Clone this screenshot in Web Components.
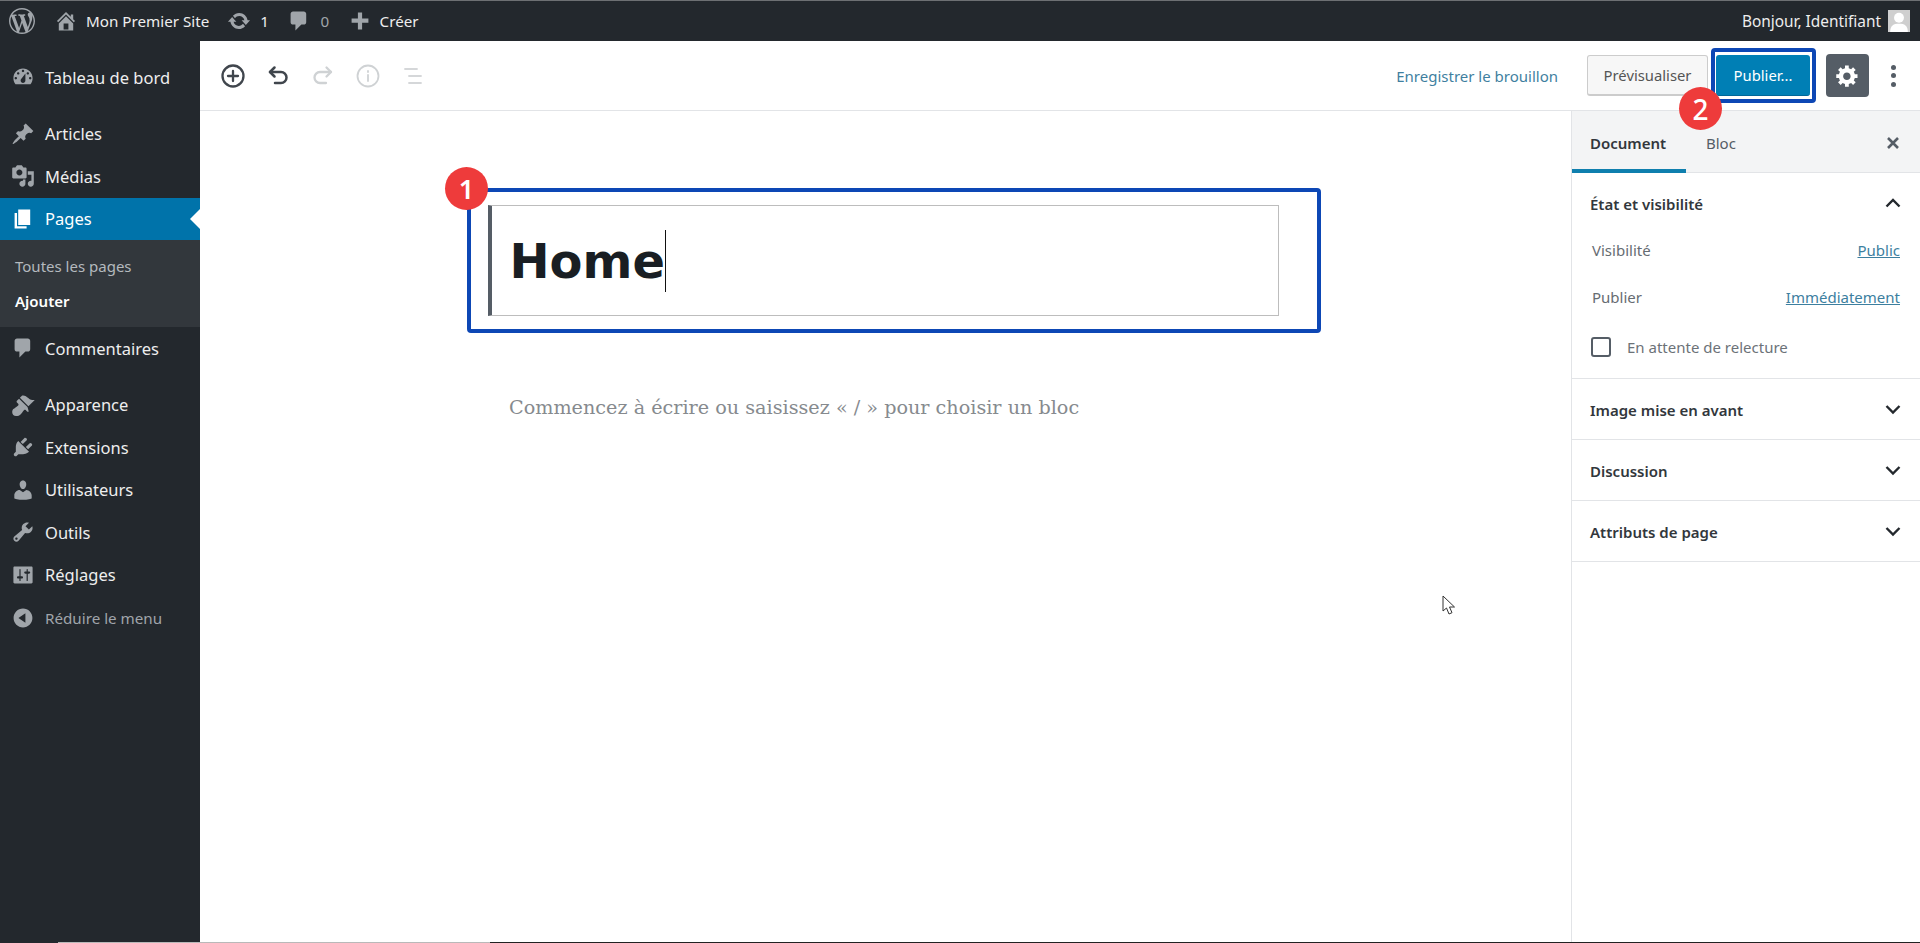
<!DOCTYPE html>
<html lang="fr">
<head>
<meta charset="utf-8">
<title>Ajouter une page</title>
<style>
  html, body { margin: 0; height: 943px; overflow: hidden; background: #fff; }
  body { font-family: "Noto Sans", "Open Sans", sans-serif; }
  wp-shell { height: 943px; }
</style>
</head>
<body>
<wp-shell>
  <wp-adminbar slot="bar"></wp-adminbar>
  <wp-sidemenu slot="menu"></wp-sidemenu>
  <editor-toolbar slot="toolbar"></editor-toolbar>
  <editor-canvas slot="canvas"></editor-canvas>
  <doc-panel slot="panel"></doc-panel>
</wp-shell>

<script>
// dashicons, 20x20
const ICONS = {
  wp: 'M20 10c0-5.51-4.49-10-10-10C4.48 0 0 4.49 0 10c0 5.52 4.48 10 10 10 5.51 0 10-4.48 10-10zM7.78 15.37L4.37 6.22c.55-.02 1.17-.08 1.17-.08.5-.06.44-1.13-.06-1.11 0 0-1.45.11-2.37.11-.18 0-.37 0-.58-.01C4.12 2.69 6.87 1.11 10 1.11c2.33 0 4.45.87 6.05 2.34-.68-.11-1.65.39-1.65 1.58 0 .74.45 1.36.9 2.1.35.61.55 1.36.55 2.46 0 1.49-1.4 5-1.4 5l-3.03-8.37c.54-.02.82-.17.82-.17.5-.05.44-1.25-.06-1.22 0 0-1.44.12-2.38.12-.87 0-2.33-.12-2.33-.12-.5-.03-.56 1.2-.06 1.22l.92.08 1.26 3.41zM17.41 10c.24-.64.74-1.87.43-4.25.7 1.29 1.05 2.71 1.05 4.25 0 3.29-1.73 6.24-4.4 7.78.97-2.59 1.94-5.2 2.92-7.78zM6.1 18.09C3.12 16.65 1.11 13.53 1.11 10c0-1.3.23-2.48.72-3.59C3.25 10.3 4.67 14.2 6.1 18.09zm4.03-6.63l2.58 6.98c-.86.29-1.76.45-2.71.45-.79 0-1.57-.11-2.29-.33.81-2.38 1.62-4.74 2.42-7.1z',
  home: 'M16 8.5l1.53 1.53-1.06 1.06L10 4.62l-6.47 6.47-1.06-1.06L10 2.5l4 4v-2h2v4zm-6-2.46l6 5.99V18H4v-5.97zM12 17v-5H8v5h4z',
  update: 'M10.2 3.28c3.53 0 6.43 2.61 6.92 6h2.08l-3.5 4-3.5-4h2.32c-.45-1.97-2.21-3.45-4.32-3.45-1.45 0-2.73.71-3.54 1.78L4.95 5.66C6.23 4.2 8.11 3.28 10.2 3.28zm-.4 13.44c-3.52 0-6.43-2.61-6.92-6H.8l3.5-4c1.17 1.33 2.33 2.67 3.5 4H5.48c.45 1.97 2.21 3.45 4.32 3.45 1.45 0 2.73-.71 3.54-1.78l1.71 1.95c-1.28 1.46-3.15 2.38-5.25 2.38z',
  comment: 'M5 2h9c1.1 0 2 .9 2 2v7c0 1.1-.9 2-2 2h-2l-5 5v-5H5c-1.1 0-2-.9-2-2V4c0-1.1.9-2 2-2z',
  plus: 'M17 8v3.500h-5.250V17h-3.500v-5.500H3V8h5.250V3h3.500v5H17z',
  dashboard: 'M3.76 16h12.48c1.1-1.37 1.76-3.11 1.76-5 0-4.42-3.58-8-8-8s-8 3.58-8 8c0 1.89.66 3.63 1.76 5zM10 4c.55 0 1 .45 1 1s-.45 1-1 1-1-.45-1-1 .45-1 1-1zM6 6c.55 0 1 .45 1 1s-.45 1-1 1-1-.45-1-1 .45-1 1-1zm8 0c.55 0 1 .45 1 1s-.45 1-1 1-1-.45-1-1 .45-1 1-1zm-5.37 5.55L12 7v6c0 1.1-.9 2-2 2s-2-.9-2-2c0-.57.24-1.08.63-1.45zM4 10c.55 0 1 .45 1 1s-.45 1-1 1-1-.45-1-1 .45-1 1-1zm12 0c.55 0 1 .45 1 1s-.45 1-1 1-1-.45-1-1 .45-1 1-1z',
  pin: 'M10.44 3.02l1.82-1.82 6.36 6.35-1.83 1.82c-1.05-.68-2.48-.57-3.41.36l-.75.75c-.92.93-1.04 2.35-.35 3.41l-1.83 1.82-2.41-2.41-2.8 2.79c-.42.42-3.38 2.71-3.8 2.29s1.86-3.39 2.28-3.81l2.79-2.79L4.1 9.36l1.83-1.82c1.05.69 2.48.57 3.4-.36l.75-.75c.93-.92 1.05-2.35.36-3.41z',
  media: 'M13 11V4c0-.55-.45-1-1-1h-1.67L9 1H5L3.67 3H2c-.55 0-1 .45-1 1v7c0 .55.45 1 1 1h10c.55 0 1-.45 1-1zM7 4.5c1.38 0 2.5 1.12 2.5 2.5S8.38 9.5 7 9.5 4.5 8.38 4.5 7 5.62 4.5 7 4.5zM14 6h5v10.5c0 1.38-1.12 2.5-2.5 2.5S14 17.88 14 16.5s1.12-2.5 2.5-2.5c.17 0 .34.02.5.05V9h-3V6zm-4 8.05V13h2v3.5c0 1.38-1.12 2.5-2.5 2.5S7 17.88 7 16.5 8.12 14 9.5 14c.17 0 .34.02.5.05z',
  page: 'M6 15V2h10v13H6zm-1 1h8v2H3V5h2v11z',
  brush: 'M14.48 11.06L7.41 3.99l1.5-1.5c.5-.56 2.3-.47 3.51.32 1.21.8 1.43 1.28 2.91 2.1 1.18.64 2.45 1.26 4.45.85zm-.71.71L6.7 4.7 4.93 6.47c-.39.39-.39 1.02 0 1.41l1.06 1.06c.39.39.39 1.03 0 1.42-.6.6-1.43 1.11-2.21 1.69-.35.26-.7.53-1.01.84C1.43 13.23.91 14.8 1 16.1c.06.9.35 1.68.91 2.24.56.56 1.34.85 2.24.91 1.3.09 2.87-.43 4.22-1.77.31-.31.58-.66.84-1.01.58-.78 1.09-1.61 1.69-2.21.39-.39 1.03-.39 1.42 0l1.06 1.06c.39.39 1.02.39 1.41 0z',
  plug: 'M13.11 4.36L9.87 7.6 8 5.73l3.24-3.24c.35-.34 1.05-.2 1.56.32.52.51.66 1.21.31 1.55zm-8 1.77l.91-1.12 9.01 9.01-1.19.84c-.71.71-2.63 1.16-3.82 1.16H6.14L4.9 17.26c-.59.59-1.54.59-2.12 0-.59-.58-.59-1.53 0-2.12l1.24-1.24v-3.88c0-1.13.4-3.19 1.09-3.89zm7.26 3.97l3.24-3.24c.34-.35 1.04-.21 1.55.31.52.51.66 1.21.31 1.55l-3.24 3.25z',
  user: 'M10 9.25c-2.27 0-2.73-3.44-2.73-3.44C7 4.02 7.82 2 9.97 2c2.16 0 2.98 2.02 2.71 3.81 0 0-.41 3.44-2.68 3.44zm0 2.57L12.72 10c2.39 0 4.52 2.33 4.52 4.53v2.49s-3.65 1.13-7.24 1.13c-3.65 0-7.24-1.13-7.24-1.13v-2.49c0-2.25 1.94-4.48 4.47-4.48z',
  wrench: 'M16.68 9.77c-1.34 1.34-3.3 1.67-4.95.99l-5.41 6.52c-.99.99-2.59.99-3.58 0s-.99-2.59 0-3.57l6.52-5.42c-.68-1.65-.35-3.61.99-4.95 1.28-1.28 3.12-1.62 4.72-1.06l-2.89 2.89 2.82 2.82 2.86-2.87c.53 1.58.18 3.39-1.08 4.65zM3.81 16.21c.4.39 1.04.39 1.43 0 .4-.4.4-1.04 0-1.43-.39-.4-1.03-.4-1.43 0-.39.39-.39 1.03 0 1.43z',
  sliders: 'M18 16V4c0-.55-.45-1-1-1H3c-.55 0-1 .45-1 1v12c0 .55.45 1 1 1h14c.55 0 1-.45 1-1zM8 11h1c.55 0 1 .45 1 1s-.45 1-1 1H8v1.5c0 .28-.22.5-.5.5s-.5-.22-.5-.5V13H6c-.55 0-1-.45-1-1s.45-1 1-1h1V5.500c0-.28.22-.5.5-.5s.5.22.5.5V11zm5-2h-1c-.55 0-1-.45-1-1s.45-1 1-1h1V5.500c0-.28.22-.5.5-.5s.5.22.5.5V7h1c.55 0 1 .45 1 1s-.45 1-1 1h-1v5.500c0 .28-.22.5-.5.5s-.5-.22-.5-.5V9z',
  collapse: 'M10 2.16c4.33 0 7.84 3.51 7.84 7.84s-3.51 7.84-7.84 7.84S2.16 14.33 2.16 10 5.71 2.16 10 2.16zm2 11.72V6.12L6.18 9.97z',
  gear: 'M18 12h-2.18c-.17.7-.44 1.35-.81 1.93l1.54 1.54-2.1 2.1-1.54-1.54c-.58.36-1.23.63-1.91.79V19H8v-2.18c-.68-.16-1.33-.43-1.91-.79l-1.54 1.54-2.12-2.12 1.54-1.54c-.36-.58-.63-1.23-.79-1.91H1V9.030h2.17c.16-.7.44-1.35.8-1.94L2.43 5.55l2.1-2.1 1.54 1.54c.58-.37 1.24-.64 1.93-.81V2h3v2.18c.68.16 1.33.43 1.91.79l1.54-1.54 2.12 2.12-1.54 1.54c.36.59.64 1.24.8 1.94H18V12zm-8.500 1.500c1.66 0 3-1.34 3-3s-1.34-3-3-3-3 1.34-3 3 1.34 3 3 3z'
};
const icon = (name, size, color) =>
  `<svg width="${size}" height="${size}" viewBox="0 0 20 20" fill="${color}" fill-rule="evenodd" style="display:block;flex:none"><path d="${ICONS[name]}"/></svg>`;

class WpShell extends HTMLElement {
  constructor() {
    super();
    this.attachShadow({mode: 'open'});
    this.shadowRoot.innerHTML = `
      <style>
        :host { display: grid; grid-template-columns: 200px 1fr 349px; grid-template-rows: 41px 70px 1fr 1px; width: 1920px; }
        .bar { grid-column: 1 / 4; }
        .menu { grid-row: 2 / 4; }
        .toolbar { grid-column: 2 / 4; }
        .panel { position: relative; }
        /* strip left along the bottom edge of the capture */
        .edge { grid-column: 1 / 4; background: linear-gradient(90deg, #23282d 58px, #b9b9b9 58px, #b9b9b9 490px, #222 490px); }
      </style>
      <div class="bar"><slot name="bar"></slot></div>
      <div class="menu"><slot name="menu"></slot></div>
      <div class="toolbar"><slot name="toolbar"></slot></div>
      <div><slot name="canvas"></slot></div>
      <div class="panel"><slot name="panel"></slot></div>
      <div class="edge"></div>`;
  }
}

class WpAdminbar extends HTMLElement {
  constructor() {
    super();
    this.attachShadow({mode: 'open'});
    this.shadowRoot.innerHTML = `
      <style>
        :host { display: flex; align-items: center; height: 40px; border-top: 1px solid #6d7073; background: #23282d; color: #eee; font-size: 15.200px; padding: 0 10px 0 9px; }
        .it { display: flex; align-items: center; }
        .muted { color: #a0a5aa; }
        .push { margin-left: auto; font-size: 15.400px; }
        .avatar { width: 22px; height: 22px; background: #ddd; margin-left: 7px; overflow: hidden; }
      </style>
      <span class="it">${icon('wp', 26, '#a0a5aa')}</span>
      <span class="it" style="margin-left:19px">${icon('home', 24, '#a0a5aa')}<span style="margin-left:8px">Mon Premier Site</span></span>
      <span class="it" style="margin-left:18px">${icon('update', 24, '#a0a5aa')}<span style="margin-left:9px">1</span></span>
      <span class="it" style="margin-left:18.500px">${icon('comment', 24, '#a0a5aa')}<span class="muted" style="margin-left:9px">0</span></span>
      <span class="it" style="margin-left:18.500px">${icon('plus', 24, '#a0a5aa')}<span style="margin-left:8px">Créer</span></span>
      <span class="it push">Bonjour, Identifiant
        <span class="avatar"><svg width="22" height="22" viewBox="0 0 20 20" style="display:block"><rect width="20" height="20" fill="#cfcfcf"/><circle cx="10" cy="7" r="4.500" fill="#fff"/><path d="M2 20c0-6 3-7.500 8-7.500s8 1.500 8 7.500z" fill="#fff"/></svg></span>
      </span>`;
  }
}

class WpMenuItem extends HTMLElement {
  constructor() {
    super();
    this.attachShadow({mode: 'open'});
    const name = this.getAttribute('icon');
    const active = this.hasAttribute('active');
    this.shadowRoot.innerHTML = `
      <style>
        :host { display: flex; align-items: center; height: 42.500px; padding-left: 11px; position: relative; color: #eee; font-size: 16.500px; }
        :host([active]) { background: #0073aa; color: #fff; }
        :host([dim]) { color: #a0a5aa; font-size: 15.200px; padding-top: 2px; height: 40.500px; }
        .ic { width: 34px; flex: none; }
        .tip { position: absolute; right: 0; top: 50%; margin-top: -10px; border: 10px solid transparent; border-right-color: #fff; border-left-width: 0; }
      </style>
      <span class="ic">${icon(name, 24, active ? '#fff' : '#a0a5aa')}</span>
      <slot></slot>
      ${active ? '<span class="tip"></span>' : ''}`;
  }
}

class WpSidemenu extends HTMLElement {
  constructor() {
    super();
    this.attachShadow({mode: 'open'});
    this.shadowRoot.innerHTML = `
      <style>
        :host { display: block; background: #23282d; height: 901px; padding-top: 15px; box-sizing: border-box; }
        .gap { margin-top: 14px; }
        .sub { background: #32373c; height: 87px; padding: 8px 15px 0; box-sizing: border-box; font-size: 15px; color: #b4b9be; }
        .sub div { height: 35px; display: flex; align-items: center; }
        .sub .cur { color: #fff; font-weight: 600; }
      </style>
      <wp-menu-item icon="dashboard">Tableau de bord</wp-menu-item>
      <wp-menu-item class="gap" icon="pin">Articles</wp-menu-item>
      <wp-menu-item icon="media">Médias</wp-menu-item>
      <wp-menu-item icon="page" active>Pages</wp-menu-item>
      <div class="sub"><div>Toutes les pages</div><div class="cur">Ajouter</div></div>
      <wp-menu-item icon="comment">Commentaires</wp-menu-item>
      <wp-menu-item class="gap" icon="brush">Apparence</wp-menu-item>
      <wp-menu-item icon="plug">Extensions</wp-menu-item>
      <wp-menu-item icon="user">Utilisateurs</wp-menu-item>
      <wp-menu-item icon="wrench">Outils</wp-menu-item>
      <wp-menu-item icon="sliders">Réglages</wp-menu-item>
      <wp-menu-item icon="collapse" dim>Réduire le menu</wp-menu-item>`;
  }
}

class EditorToolbar extends HTMLElement {
  constructor() {
    super();
    this.attachShadow({mode: 'open'});
    this.shadowRoot.innerHTML = `
      <style>
        :host { display: flex; align-items: center; height: 69px; border-bottom: 1px solid #e2e4e7; background: #fff; padding: 0 24.500px 0 10px; font-size: 15px; }
        .tool { width: 45px; height: 30px; display: flex; align-items: center; justify-content: center; flex: none; }
        .tool svg { display: block; fill: none; stroke-linecap: round; stroke-linejoin: round; }
        .save { margin-left: auto; color: #3f7f9f; }
        .btn { height: 41px; box-sizing: border-box; border-radius: 3px; display: flex; align-items: center; justify-content: center; font-size: 14.800px; }
        .prev { width: 121px; margin-left: 29px; background: #f7f7f7; border: 1px solid #ccc; border-bottom-width: 2px; color: #555; }
        .frame { position: relative; margin-left: 3px; border: 4px solid #0d47b5; border-radius: 4px; padding: 3px 2px 3px 1px; }
        .pub { width: 94px; background: #007fb5; color: #fff; border-bottom: 1px solid #006799; }
        .gear { width: 43px; height: 43px; margin-left: 10px; background: #555d66; border-radius: 4px; display: flex; align-items: center; justify-content: center; }
        .dots { margin-left: 21.500px; width: 5px; display: flex; flex-direction: column; gap: 3.500px; }
        .dots i { width: 5px; height: 5px; border-radius: 50%; background: #555d66; }
        .badge { position: absolute; left: -36px; top: 35px; width: 43px; height: 43px; border-radius: 50%; background: #ee3b3b; color: #fff; font-size: 28px; font-weight: 500; display: flex; align-items: center; justify-content: center; z-index: 5; }
      </style>
      <span class="tool"><svg width="28" height="28" viewBox="0 0 28 28" stroke="#40464d" stroke-width="2.300"><circle cx="14" cy="14" r="10.500"/><path d="M14 9v10M9 14h10"/></svg></span>
      <span class="tool"><svg width="26" height="26" viewBox="0 0 26 26" stroke="#40464d" stroke-width="2.500"><path d="M5 9h11a5.500 5.500 0 0 1 0 11h-6"/><path d="M9.500 4.500L5 9l4.500 4.500" /></svg></span>
      <span class="tool"><svg width="26" height="26" viewBox="0 0 26 26" stroke="#cfd2d4" stroke-width="2.300"><path d="M21 9H10a5.500 5.500 0 0 0 0 11h6"/><path d="M16.500 4.500L21 9l-4.500 4.500"/></svg></span>
      <span class="tool"><svg width="26" height="26" viewBox="0 0 26 26" stroke="#cfd2d4" stroke-width="1.800"><circle cx="13" cy="13" r="10.500"/><path d="M13 12v6M13 8v1"/></svg></span>
      <span class="tool"><svg width="22" height="22" viewBox="0 0 22 22" stroke="#d5d7d9" stroke-width="1.800"><path d="M3 4h12M7 11h12M7 18h12"/></svg></span>
      <span class="save">Enregistrer le brouillon</span>
      <span class="btn prev">Prévisualiser</span>
      <span class="frame"><span class="btn pub">Publier...</span><span class="badge">2</span></span>
      <span class="gear">${icon('gear', 25, '#fff')}</span>
      <span class="dots"><i></i><i></i><i></i></span>`;
  }
}

class EditorCanvas extends HTMLElement {
  constructor() {
    super();
    this.attachShadow({mode: 'open'});
    this.shadowRoot.innerHTML = `
      <style>
        :host { display: block; height: 831px; padding: 77px 0 0 267px; box-sizing: border-box; background: #fff; position: relative; }
        .frame { position: relative; width: 854px; height: 145px; box-sizing: border-box; border: 4px solid #0d47b5; border-radius: 4px; padding: 13px 38px 13px 17px; }
        .title { height: 111px; box-sizing: border-box; border: 1px solid #bdbdbd; border-left: 4px solid #555d66; padding-left: 17.500px; display: flex; align-items: center; color: #191e23; font: 800 47.900px "DejaVu Sans", sans-serif; }
        .word { padding-top: 2px; }
        .caret { width: 1px; height: 62px; background: #111; }
        .badge { position: absolute; left: -26px; top: -25px; width: 43px; height: 43px; border-radius: 50%; background: #ee3b3b; color: #fff; font: 600 27px "Noto Sans", sans-serif; display: flex; align-items: center; justify-content: center; }
        .ph { margin: 60px 0 0 42px; color: #868a8e; font: 19.200px/30px "DejaVu Serif", serif; }
        .cursor { position: absolute; left: 1242px; top: 484px; }
      </style>
      <div class="frame">
        <div class="title"><span class="word">Home</span><span class="caret"></span></div>
        <span class="badge">1</span>
      </div>
      <div class="ph">Commencez à écrire ou saisissez « / » pour choisir un bloc</div>
      <svg class="cursor" width="14" height="21" viewBox="0 0 14 21" fill="#fff" stroke="#333" stroke-width="1"><path d="M1 1v15l3.500-3 2.500 6 3-1.300-2.500-5.700H12.500z"/></svg>`;
  }
}

class PanelSection extends HTMLElement {
  constructor() {
    super();
    this.attachShadow({mode: 'open'});
    const open = this.hasAttribute('open');
    this.shadowRoot.innerHTML = `
      <style>
        :host { display: block; border-bottom: 1px solid #e2e4e7; }
        .head { display: flex; align-items: center; justify-content: space-between; height: 60px; padding: 0 17px 0 18px; font-size: 15px; font-weight: 600; color: #32373c; }
        .head span { padding-top: 1.500px; }
        svg { display: block; }
      </style>
      <div class="head"><span>${this.getAttribute('label')}</span>
        <svg width="20" height="20" viewBox="0 0 20 20" fill="none" stroke="#23282d" stroke-width="2.400"><path d="${open ? 'M3.500 13.500L10 7l6.500 6.500' : 'M3.500 7L10 13.500 16.500 7'}"/></svg>
      </div>
      <slot></slot>`;
  }
}

class DocPanel extends HTMLElement {
  constructor() {
    super();
    this.attachShadow({mode: 'open'});
    this.shadowRoot.innerHTML = `
      <style>
        :host { display: block; height: 831px; box-sizing: border-box; border-left: 1px solid #e2e4e7; background: #fff; font-size: 15px; color: #666c72; }
        .tabs { display: flex; align-items: center; height: 62px; box-sizing: border-box; padding: 2px 0 0 18px; background: #f3f4f5; border-bottom: 1px solid #e2e4e7; position: relative; color: #555d66; }
        .tabs b { font-weight: 600; color: #32373c; width: 116px; }
        .line { position: absolute; left: 0; bottom: -1px; width: 114px; height: 4px; background: #0f7fae; }
        .x { margin-left: auto; margin-right: 20px; display: block; }
        .row { display: flex; justify-content: space-between; align-items: center; height: 47px; padding: 0 20px; }
        a { color: #3d7f9f; text-decoration: underline; }
        .check { display: flex; align-items: center; height: 52.500px; padding-left: 19px; color: #6c7278; }
        .box { width: 20px; height: 20px; box-sizing: border-box; border: 2px solid #555d66; border-radius: 3px; margin-right: 16px; }
        .pad { padding-bottom: 5px; margin-top: -6.500px; }
      </style>
      <div class="tabs"><b>Document</b><span>Bloc</span>
        <svg class="x" width="14" height="14" viewBox="0 0 14 14" stroke="#555d66" stroke-width="2.600"><path d="M2 2l10 10M12 2L2 12"/></svg>
        <span class="line"></span></div>
      <panel-section label="État et visibilité" open>
        <div class="pad">
          <div class="row"><span>Visibilité</span><a>Public</a></div>
          <div class="row"><span>Publier</span><a>Immédiatement</a></div>
          <div class="check"><span class="box"></span>En attente de relecture</div>
        </div>
      </panel-section>
      <panel-section label="Image mise en avant"></panel-section>
      <panel-section label="Discussion"></panel-section>
      <panel-section label="Attributs de page"></panel-section>`;
  }
}

customElements.define('wp-shell', WpShell);
customElements.define('wp-adminbar', WpAdminbar);
customElements.define('wp-menu-item', WpMenuItem);
customElements.define('wp-sidemenu', WpSidemenu);
customElements.define('editor-toolbar', EditorToolbar);
customElements.define('editor-canvas', EditorCanvas);
customElements.define('panel-section', PanelSection);
customElements.define('doc-panel', DocPanel);
</script>
</body>
</html>
